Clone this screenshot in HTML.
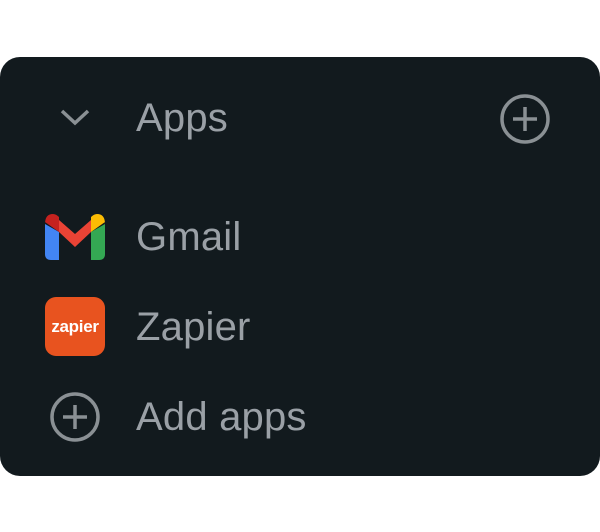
<!DOCTYPE html>
<html><head><style>
body{margin:0;width:600px;height:532px;background:#fff;position:relative;overflow:hidden;font-family:"Liberation Sans",Roboto,sans-serif}
.card{position:absolute;left:0;top:57px;width:600px;height:419px;background:#121a1e;border-radius:20px}
.t{position:absolute;left:136px;color:#9aa0a6;font-size:40px;line-height:1;letter-spacing:0.2px}
</style></head><body>
<div class="card"></div>
<svg style="position:absolute;left:58px;top:105px" width="34" height="24" viewBox="0 0 34 24"><path d="M4 6 L17 18 L30 6" fill="none" stroke="#8a9094" stroke-width="3.5"/></svg>
<div class="t" style="top:98px">Apps</div>
<svg style="position:absolute;left:499px;top:93px" width="52" height="52" viewBox="0 0 52 52"><circle cx="26" cy="26" r="23" fill="none" stroke="#8a9094" stroke-width="3.5"/><path d="M26 14V38M14 26H38" stroke="#8a9094" stroke-width="3.5"/></svg>
<svg style="position:absolute;left:45px;top:214px" width="60" height="46" viewBox="0 0 60 46">
<path d="M0 10 V40 Q0 46 6 46 H14 V18 Z" fill="#4285f4"/>
<path d="M60 10 V40 Q60 46 54 46 H46 V18 Z" fill="#34a853"/>
<path d="M14 18 L30 33 L46 18 V6 L30 20 L14 6 Z" fill="#ea4335"/>
<path d="M0 10 Q0 0 8 0 Q11 0 14 3 V18 L0 8Z" fill="#c5221f"/>
<path d="M60 10 Q60 0 52 0 Q49 0 46 3 V18 L60 8Z" fill="#fbbc04"/>
</svg>
<div class="t" style="top:217px">Gmail</div>
<div style="position:absolute;left:45px;top:297px;width:60px;height:59px;background:#e8531f;border-radius:11px;color:#fff;font-weight:bold;font-size:17px;text-align:center;line-height:59px;letter-spacing:-0.3px">zapier</div>
<div class="t" style="top:307px">Zapier</div>
<svg style="position:absolute;left:49px;top:391px" width="52" height="52" viewBox="0 0 52 52"><circle cx="26" cy="26" r="23" fill="none" stroke="#8a9094" stroke-width="3.5"/><path d="M26 14V38M14 26H38" stroke="#8a9094" stroke-width="3.5"/></svg>
<div class="t" style="top:397px">Add apps</div>
</body></html>
